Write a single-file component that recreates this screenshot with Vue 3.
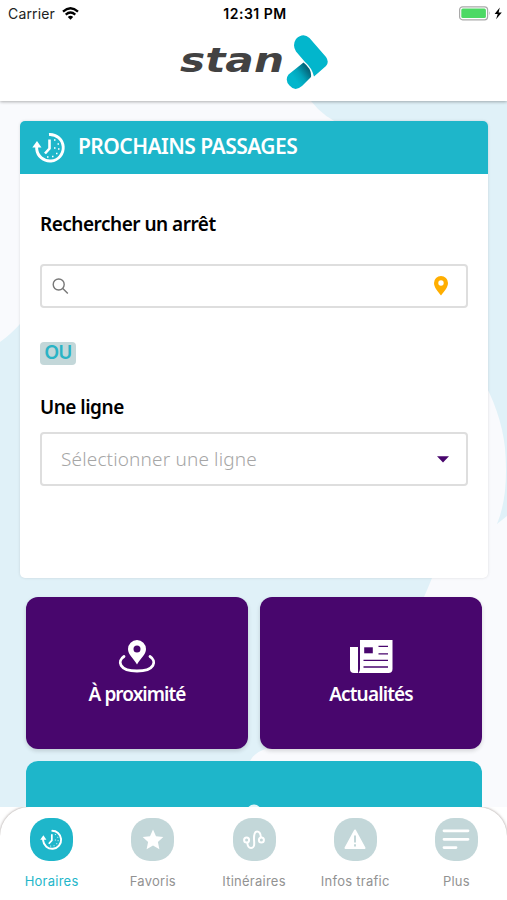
<template>
  <div class="screen">
    <header class="header">
      <div class="status-bar">
        <div class="status-left">
          <span class="carrier">Carrier</span>
          <svg class="wifi" viewBox="0 0 17 13">
            <path d="M1 4.6Q8.5-2 16 4.6" fill="none" stroke="#000" stroke-width="2.3" />
            <path d="M3.7 7.6Q8.5 3.4 13.3 7.6" fill="none" stroke="#000" stroke-width="2.2" />
            <path d="M5.8 9.9Q8.5 7.7 11.2 9.9L8.5 12.7z" />
          </svg>
        </div>
        <span class="time">12:31 PM</span>
        <svg class="battery" viewBox="0 0 43 15">
          <rect x=".6" y=".8" width="28" height="13" rx="3" fill="#fff" stroke="#a9a9a9" stroke-width="1.2" />
          <rect x="2.3" y="2.5" width="24.6" height="9.6" rx="1.5" fill="#4cd964" />
          <path d="M30 5.2q1.6 2.1 0 4.2z" fill="#a9a9a9" />
          <path d="M40.8 1.5L35.6 8h3.1l-1.6 5.3L42.8 6.5h-3.2z" />
        </svg>
      </div>
      <div class="logo">
        <svg viewBox="0 0 150 56" width="150" height="56">
          <text class="logo-text" x="2" y="37.500" textLength="104" lengthAdjust="spacingAndGlyphs">stan</text>
          <path d="M131.500 4L148 23Q151.500 28 148 32L136 42.500Q134 34 127 28L118 17.500Q114 11 118 5Q125-2 131.500 4z" fill="#02b6cc" />
          <path d="M125.500 28.500Q134 35 133 43L124 52Q117 58 111.500 51.500Q106.500 46 110.500 40.500z" fill="url(#fold)" />
          <defs>
            <linearGradient id="fold" x1=".35" y1=".65" x2=".85" y2=".25">
              <stop offset="0" stop-color="#02b6cc" />
              <stop offset=".45" stop-color="#02a3ba" />
              <stop offset="1" stop-color="#05677c" />
            </linearGradient>
          </defs>
        </svg>
      </div>
    </header>

    <main class="content">
      <svg class="backdrop" viewBox="0 101 507 706" preserveAspectRatio="none">
        <path d="M311 101Q324 118 345 126L507 180V101z" />
        <path d="M0 342Q10 335 20 324L200 230L507 170V807H0z" />
        <path class="pale" d="M480 375Q501 411 505 448Q509 495 497 524L507 516V807H250V761Q254 753 265 749Q330 738 380 690L424 597Q428 588 432 578L470 480z" />
      </svg>

      <section class="card">
        <div class="card-head">
          <svg class="head-icon" viewBox="0 0 34 32">
            <use href="#clock-back" />
          </svg>
          <h1 class="card-title">PROCHAINS PASSAGES</h1>
        </div>
        <div class="card-body">
          <label class="label label-stop">Rechercher un arrêt</label>
          <div class="search">
            <svg width="17" height="17" viewBox="0 0 17 17" fill="none" stroke="#777" stroke-width="1.4">
              <circle cx="6.7" cy="6.500" r="5.500" />
              <path d="M10.8 10.500l5 5" />
            </svg>
            <svg width="14" height="20" viewBox="0 0 14 20">
              <path d="M7 0a7 7 0 0 0-7 7c0 4.500 4 8.500 7 12.500 3-4 7-8 7-12.500a7 7 0 0 0-7-7zm0 4.300a2.700 2.700 0 1 1 0 5.400 2.700 2.700 0 0 1 0-5.400z" fill="#ffae00" />
            </svg>
          </div>
          <span class="or">OU</span>
          <label class="label label-line">Une ligne</label>
          <div class="select">
            <span class="placeholder">Sélectionner une ligne</span>
            <svg width="12" height="7" viewBox="0 0 12 7"><path d="M0 .3h12L6 6.500z" fill="#48066d" /></svg>
          </div>
        </div>
      </section>

      <div class="tiles">
        <button class="tile">
          <svg width="38" height="34" viewBox="0 0 38 34">
            <path d="M6 16.500C-1 21 1 31 19 31s20-10 13-14.500" fill="none" stroke="#fff" stroke-width="2.800" stroke-linecap="round" />
            <path d="M19 0a9 9 0 0 0-9 9c0 6 5.500 9 9 15.500C22.500 18 28 15 28 9a9 9 0 0 0-9-9zm0 5.600a3.500 3.500 0 1 1 0 7 3.500 3.500 0 0 1 0-7z" fill="#fff" />
          </svg>
          <span class="near">À proximité</span>
        </button>
        <button class="tile">
          <svg width="43" height="34" viewBox="0 0 43 34">
            <path d="M0 7h8v26H4q-4 0-4-4z" fill="#fff" />
            <path d="M10 0h32.500v29q0 4-4 4H8.500q1.500-2 1.500-4z" fill="#fff" />
            <path d="M14.200 7.300h8.600v6h-8.600z" fill="#48066d" />
            <path d="M28.500 6.300H38M28.500 13.800H38M13.500 20.300H38M13.500 27H38" stroke="#48066d" stroke-width="1.300" />
          </svg>
          <span class="news">Actualités</span>
        </button>
      </div>

      <div class="tile-wide">
        <svg width="16" height="16" viewBox="0 0 16 16"><circle cx="8" cy="8" r="7.500" fill="#e5f5f8" /></svg>
      </div>
    </main>

    <nav class="tabs">
      <div class="tabs-inner">
        <a v-for="tab in tabs" :key="tab.id" class="tab" :class="{ active: tab.id === current }" @click="current = tab.id">
          <span class="tab-icon">
            <svg v-if="tab.id === 'horaires'" width="23" height="22" viewBox="0 0 34 32">
              <use href="#clock-back" />
            </svg>
            <svg v-else-if="tab.id === 'favoris'" width="22" height="21" viewBox="0 0 22 21">
              <path d="M11 .5l3 6.700 7.300.8-5.400 5 1.500 7.300L11 16.500l-6.400 3.800L6.100 13 .7 8l7.300-.8z" fill="#fff" />
            </svg>
            <svg v-else-if="tab.id === 'itineraires'" width="22" height="20" viewBox="0 0 22 20" fill="none" stroke="#fff" stroke-width="2">
              <circle cx="3.600" cy="10" r="2.500" />
              <circle cx="18.400" cy="10" r="2.500" />
              <path d="M4.300 12.500C4.500 16.500 6 18 8 18c4.500 0 3-6 3-9.500C11 4 11.500 1.500 14 1.500c2.500 0 3.700 2.500 3.900 5.800" />
            </svg>
            <svg v-else-if="tab.id === 'infos'" width="22" height="21" viewBox="0 0 22 21">
              <path d="M11 1.500L20.500 19h-19z" fill="#fff" stroke="#fff" stroke-width="2" stroke-linejoin="round" />
              <path d="M11 6.500v7M11 15.300v2.200" stroke="#c3d7d9" stroke-width="2" />
            </svg>
            <svg v-else width="28" height="21" viewBox="0 0 28 21" stroke="#fff" stroke-width="2.800" stroke-linecap="round">
              <path d="M2 1.800h24M2 10.300h24M2 18.600h12" />
            </svg>
          </span>
          <span class="tab-label">{{ tab.label }}</span>
        </a>
      </div>
    </nav>

    <!-- Icône partagée entre la carte et la barre d'onglets -->
    <svg class="sprite" width="0" height="0">
      <symbol id="clock-back" viewBox="0 0 34 32">
        <path d="M17 2.500A13.300 13.300 0 1 1 4.700 17V14" fill="none" stroke="#fff" stroke-width="2.900" />
        <path d="M.3 15.500L5 9l4.500 6.500z" fill="#fff" />
        <path d="M17.500 7.500v9L13 21.500" fill="none" stroke="#fff" stroke-width="2.600" />
        <path d="M22 8h1.500M25.500 12H27M26 17h1.500M24 21.500h1.500M20 24.500h1.500M15 25h1.500M22 16h1.500" stroke="#fff" stroke-width="1.300" />
      </symbol>
    </svg>
  </div>
</template>

<script setup>
import { ref } from 'vue'

const current = ref('horaires')

const tabs = [
  { id: 'horaires', label: 'Horaires' },
  { id: 'favoris', label: 'Favoris' },
  { id: 'itineraires', label: 'Itinéraires' },
  { id: 'infos', label: 'Infos trafic' },
  { id: 'plus', label: 'Plus' }
]
</script>

<style>
body {
  margin: 0;
}
</style>

<style scoped>
* {
  box-sizing: border-box;
}

.screen {
  display: flex;
  flex-direction: column;
  width: 507px;
  height: 900px;
  overflow: hidden;
  background: #fff;
  font-family: 'Noto Sans', 'Open Sans', sans-serif;
}

svg {
  display: block;
  flex-shrink: 0;
}

/* En-tête */
.header {
  position: relative;
  z-index: 2;
  height: 101px;
  background: #fff;
  box-shadow: 0 1px 3px rgba(0, 0, 0, 0.3);
}

.status-bar {
  display: grid;
  grid-template-columns: 1fr auto 1fr;
  align-items: center;
  height: 27px;
  padding: 0 5px 0 8px;
  font-family: Inter, sans-serif;
  font-size: 14px;
  color: #000;
}

.status-left {
  display: flex;
  align-items: center;
  gap: 7px;
}

.carrier {
  color: #222;
  letter-spacing: 0.15px;
}

.wifi {
  width: 17px;
  height: 13px;
}

.time {
  font-weight: 600;
  letter-spacing: 0.5px;
}

.battery {
  width: 43px;
  height: 15px;
  justify-self: end;
}

.logo {
  padding: 7px 0 0 178px;
}

.logo-text {
  font-family: 'DejaVu Sans', sans-serif;
  font-size: 34px;
  font-weight: 700;
  font-style: italic;
  fill: #424242;
}

/* Contenu */
.content {
  position: relative;
  flex: 1;
  min-height: 0;
  padding: 20px 19px 0 20px;
  overflow: hidden;
  background: #f9fafd;
}

.backdrop {
  position: absolute;
  inset: 0;
  width: 100%;
  height: 100%;
  fill: #e0f1f8;
}

.pale {
  fill: #f9fafd;
}

.card {
  position: relative;
  height: 457px;
  background: #fff;
  border-radius: 5px;
  box-shadow: 0 0 3px rgba(0, 0, 0, 0.12);
  overflow: hidden;
}

.card-head {
  display: flex;
  align-items: center;
  gap: 12px;
  height: 53px;
  padding-left: 12px;
  background: #1eb6ca;
}

.head-icon {
  width: 34px;
  height: 32px;
}

.card-title {
  margin: 0 0 4px;
  font-size: 21px;
  font-weight: 600;
  color: #fff;
  letter-spacing: -0.55px;
}

.card-body {
  display: flex;
  flex-direction: column;
  align-items: flex-start;
  padding: 36px 20px 0;
}

.label {
  font-size: 19px;
  line-height: 28px;
  font-weight: 600;
  color: #000;
  letter-spacing: -0.5px;
}

.search,
.select {
  display: flex;
  align-items: center;
  justify-content: space-between;
  width: 428px;
  border: 2px solid #dedede;
  border-radius: 4px;
  background: #fff;
}

.search {
  height: 44px;
  margin-top: 26px;
  padding: 0 18px 0 10px;
}

.or {
  width: 36px;
  height: 23px;
  margin-top: 34px;
  border-radius: 4px;
  background: #c3d7d9;
  color: #2ab3c5;
  font-size: 19px;
  font-weight: 600;
  line-height: 21px;
  letter-spacing: -0.8px;
  text-align: center;
}

.label-line {
  margin-top: 28px;
}

.select {
  height: 54px;
  margin-top: 11px;
  padding: 0 17px 0 19px;
}

.placeholder {
  font-size: 19px;
  font-weight: 300;
  letter-spacing: 0.15px;
  color: #a6a6a6;
}

/* Tuiles */
.tiles {
  position: relative;
  display: flex;
  gap: 12px;
  margin: 19px 6px 0;
}

.tile {
  display: flex;
  flex: 1;
  flex-direction: column;
  align-items: center;
  height: 152px;
  padding: 43px 0 0;
  border: none;
  border-radius: 12px;
  background: #48066d;
  box-shadow: 0 2px 4px rgba(0, 0, 0, 0.15);
  color: #fff;
  font-family: inherit;
  font-size: 19px;
  font-weight: 600;
}

.tile span {
  margin-top: 6px;
  line-height: 28px;
}

.near {
  letter-spacing: -0.95px;
}

.news {
  letter-spacing: -0.85px;
}

.tile-wide {
  position: relative;
  display: flex;
  justify-content: center;
  height: 152px;
  margin: 12px 6px 0;
  padding-top: 43px;
  border-radius: 12px;
  background: #1eb6ca;
}

/* Barre d'onglets */
.tabs {
  height: 93px;
  overflow: hidden;
  background: #fff;
}

.tabs-inner {
  display: flex;
  height: 110px;
  padding: 0 0 0 1px;
  border-radius: 29px 29px 0 0;
  background: #fff;
  box-shadow: 0 0 3px rgba(90, 75, 70, 0.6);
}

.tab {
  display: flex;
  flex: 1 1 0;
  flex-direction: column;
  align-items: center;
  padding-top: 11px;
  color: #929292;
  cursor: pointer;
}

.tab-icon {
  display: flex;
  align-items: center;
  justify-content: center;
  width: 43px;
  height: 43px;
  border-radius: 19px;
  background: #c3d7d9;
}

.tab-label {
  margin-top: 11px;
  font-family: Inter, sans-serif;
  font-size: 13px;
  line-height: 18px;
  letter-spacing: 0.25px;
  white-space: nowrap;
}

.active {
  color: #1eb6ca;
}

.active .tab-icon {
  background: #1eb6ca;
}

.sprite {
  position: absolute;
}
</style>
